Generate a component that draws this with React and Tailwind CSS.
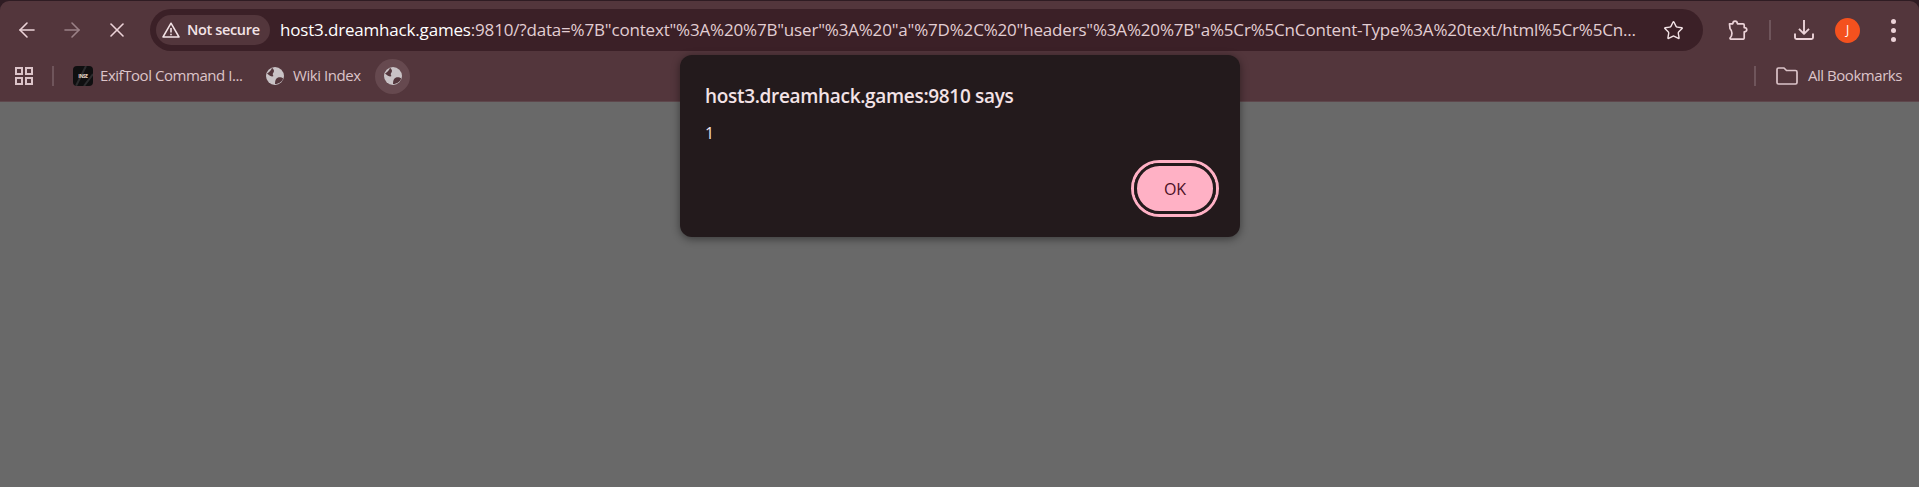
import { ArrowLeft, ArrowRight, X, Star } from 'lucide-react';

const uiFont = "font-['Open_Sans','Noto_Sans',sans-serif]";

function Globe({ className }) {
  return (
    <svg viewBox="0 0 18 18" className={className}>
      <circle cx="9" cy="9" r="9" fill="#c9c3c6" />
      <path d="M1 6.5 C3 5.5 5 3.5 6 .8 C8 2.5 8.5 4 7.5 5.5 C6.5 6.5 6.5 8 7.5 9 C6 10 4 9 1 6.5Z" fill="#53363c" />
      <path d="M9 17 C9 14 9.5 11.5 12 10.5 C14 10 16 10.5 17.3 11.5 C16 14.5 13 17 9 17Z" fill="#53363c" />
    </svg>
  );
}

function WarningIcon() {
  return (
    <svg viewBox="0 0 18 16" className="w-[18px] h-4" fill="none" stroke="#f3e3e6" strokeWidth="1.5" strokeLinejoin="round">
      <path d="M9 1.2 L17 15 H1Z" />
      <path d="M9 6 V10.5 M9 11.8 V13.3" strokeWidth="1.6" />
    </svg>
  );
}

function AppsIcon() {
  return (
    <svg viewBox="0 0 18 18" className="w-[18px] h-[18px]" fill="none" stroke="#dcc4c9" strokeWidth="2">
      <rect x="1" y="1" width="6" height="6" />
      <rect x="11" y="1" width="6" height="6" />
      <rect x="1" y="11" width="6" height="6" />
      <rect x="11" y="11" width="6" height="6" />
    </svg>
  );
}

function PuzzleIcon() {
  return (
    <svg viewBox="0 0 20 20" className="w-5 h-5" fill="none" stroke="#ecd3d8" strokeWidth="1.7" strokeLinejoin="round">
      <path d="M1.5 3.8 H4.8 C5 .3 9.2 .3 9.4 3.8 H15 C15.8 3.8 16.2 4.2 16.2 5 V7.6 C19.6 7.4 19.6 12 16.2 11.8 V18 C16.2 18.8 15.8 19.2 15 19.2 H3 C2.4 19.2 2 18.8 2 18.2 C4.6 15.5 4.6 11 2 8.6Z" />
    </svg>
  );
}

function DownloadIcon() {
  return (
    <svg viewBox="0 0 20 20" className="w-5 h-5" fill="none" stroke="#ecd3d8" strokeWidth="1.9" strokeLinejoin="round">
      <path d="M10 0 V13.5 M5 8.8 L10 13.8 L15 8.8" />
      <path d="M1 13.5 V17.5 C1 18.5 1.5 19 2.5 19 H17.5 C18.5 19 19 18.5 19 17.5 V13.5" />
    </svg>
  );
}

function MoreIcon() {
  return (
    <div className="flex flex-col gap-[4px]">
      <div className="w-[5px] h-[5px] rounded-full bg-[#ecd3d8]" />
      <div className="w-[5px] h-[5px] rounded-full bg-[#ecd3d8]" />
      <div className="w-[5px] h-[5px] rounded-full bg-[#ecd3d8]" />
    </div>
  );
}

function FolderIcon() {
  return (
    <svg viewBox="0 0 22 18" className="w-[22px] h-[18px]" fill="none" stroke="#dcc4c9" strokeWidth="1.7" strokeLinejoin="round">
      <path d="M1 2.5 C1 1.5 1.5 1 2.5 1 H8 L10.5 3.5 H19.5 C20.5 3.5 21 4 21 5 V15.5 C21 16.5 20.5 17 19.5 17 H2.5 C1.5 17 1 16.5 1 15.5Z" />
    </svg>
  );
}

function BookmarkLogo() {
  return (
    <div className="relative w-5 h-5 overflow-hidden rounded-[4px] bg-[#0f0f10] flex items-center justify-center">
      <svg viewBox="0 0 20 20" className="absolute inset-0 w-5 h-5" stroke="#2c2c2e" strokeWidth="2">
        <path d="M3 20 L13 0 M11 20 L20 8" />
      </svg>
      <span className="relative text-[5px] leading-none font-bold text-[#e6d9c4]">INSE</span>
    </div>
  );
}

function Toolbar() {
  return (
    <div className="flex items-center h-[42px] pl-[15px] pr-[23px]">
      <ArrowLeft className="w-6 h-6 text-[#ecd3d8]" strokeWidth={1.6} />
      <ArrowRight className="w-6 h-6 ml-[21px] text-[#9b8187]" strokeWidth={1.6} />
      <X className="w-6 h-6 ml-[21px] text-[#ecd3d8]" strokeWidth={1.6} />
      <div className="flex flex-1 items-center h-[42px] ml-[21px] pl-1.5 pr-[19px] rounded-full bg-[#3b2027]">
        <div className="flex items-center h-[30px] w-[114px] pl-[6px] rounded-full bg-[#53363c]">
          <WarningIcon />
          <span className="ml-[7px] text-[14.5px] font-semibold tracking-[-0.35px] text-[#f3e3e6]">Not secure</span>
        </div>
        <div className="flex-1 ml-[10px] text-[17px] tracking-[-0.18px] whitespace-nowrap overflow-hidden text-[#f3e3e6]">
          <span className="text-white">host3.dreamhack.games</span>
          <span className="text-[#e2ced3]">:9810/?data=%7B"context"%3A%20%7B"user"%3A%20"a"%7D%2C%20"headers"%3A%20%7B"a%5Cr%5CnContent-Type%3A%20text/html%5Cr%5Cn...</span>
        </div>
        <Star className="w-[21px] h-[21px] ml-3 text-[#f3e3e6]" strokeWidth={1.6} />
      </div>
      <div className="ml-[25px]"><PuzzleIcon /></div>
      <div className="w-0.5 h-5 ml-[21px] bg-[#6f555b]" />
      <div className="ml-[23px]"><DownloadIcon /></div>
      <div className="flex items-center justify-center w-[25px] h-[25px] ml-[21px] rounded-full bg-[#f4511e] text-[12px] text-white">J</div>
      <div className="ml-[31px]"><MoreIcon /></div>
    </div>
  );
}

function BookmarksBar() {
  return (
    <div className="flex items-center h-[50px] pl-[15px] pr-[17px] text-[15px] tracking-[-0.45px] text-[#dcc4c9]">
      <AppsIcon />
      <div className="w-0.5 h-5 ml-[19px] bg-[#6f555b]" />
      <div className="ml-[19px]"><BookmarkLogo /></div>
      <span className="ml-[7px] pb-0.5 w-[143px] whitespace-nowrap">ExifTool Command I...</span>
      <Globe className="w-[18px] h-[18px] ml-[23px]" />
      <span className="ml-[9px] pb-0.5 w-[68px] whitespace-nowrap">Wiki Index</span>
      <div className="flex items-center justify-center w-[35px] h-[35px] ml-[14px] rounded-full bg-[#66494f]">
        <Globe className="w-[18px] h-[18px]" />
      </div>
      <div className="flex-1" />
      <div className="w-0.5 h-5 bg-[#6f555b]" />
      <div className="ml-5"><FolderIcon /></div>
      <span className="ml-[10px] pb-0.5 whitespace-nowrap">All Bookmarks</span>
    </div>
  );
}

function AlertDialog() {
  return (
    <div className="absolute left-[680px] top-[55px] w-[560px] h-[182px] pt-[29px] pl-[25px] pr-[21px] rounded-xl bg-[#231a1c] shadow-[0_2px_8px_rgba(0,0,0,0.45)]">
      <div className="text-[19px] leading-6 font-semibold tracking-[-0.32px] text-[#f3e3e6]">host3.dreamhack.games:9810 says</div>
      <div className="mt-[15px] text-[16px] leading-5 text-[#f3e3e6]">1</div>
      <div className="flex justify-end mt-[17px]">
        <button className="w-[88px] h-[57px] rounded-full border-[3px] border-[#ffb1c5]">
          <span className="flex items-center justify-center w-full h-full rounded-full border-[3px] border-[#231a1c] bg-[#ffb1c5] text-[16px] text-[#4a0f24]">OK</span>
        </button>
      </div>
    </div>
  );
}

export default function App() {
  return (
    <div className={`relative h-screen overflow-hidden flex flex-col bg-[#696969] ${uiFont}`}>
      <div className="bg-[#2f1c23] pt-px">
        <div className="h-[101px] pt-2 rounded-t-[9px] border-b border-[#5e474c] bg-[#53363c]">
          <Toolbar />
          <BookmarksBar />
        </div>
      </div>
      <AlertDialog />
    </div>
  );
}
